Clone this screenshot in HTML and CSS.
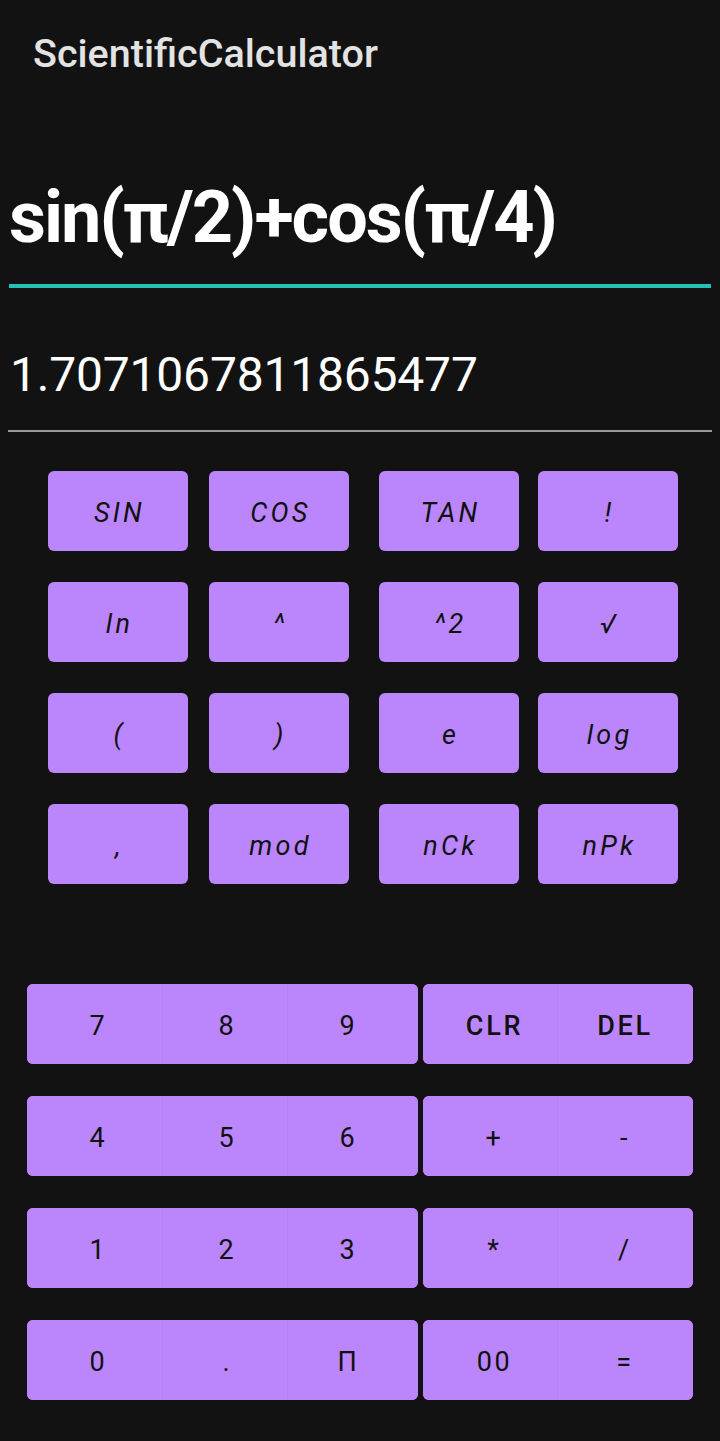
FILE: index.html
```html
<!DOCTYPE html>
<html lang="en">
<head>
<meta charset="utf-8">
<title>ScientificCalculator</title>
<link rel="stylesheet" href="styles.css">
</head>
<body>
<div class="app">
  <header class="appbar">ScientificCalculator</header>

  <div class="expression">sin(π/2)+cos(π/4)</div>
  <div class="result">1.7071067811865477</div>

  <div class="sci-grid">
    <button class="sci">SIN</button>
    <button class="sci">COS</button>
    <button class="sci">TAN</button>
    <button class="sci">!</button>
    <button class="sci">ln</button>
    <button class="sci">^</button>
    <button class="sci">^2</button>
    <button class="sci">√</button>
    <button class="sci">(</button>
    <button class="sci">)</button>
    <button class="sci">e</button>
    <button class="sci">log</button>
    <button class="sci">,</button>
    <button class="sci">mod</button>
    <button class="sci">nCk</button>
    <button class="sci">nPk</button>
  </div>

  <div class="keypad">
    <div class="key-row">
      <div class="group group-num">
        <button class="key k1">7</button><button class="key k2">8</button><button class="key k3">9</button>
      </div>
      <div class="group group-op">
        <button class="key o1 word">CLR</button><button class="key o2 word">DEL</button>
      </div>
    </div>
    <div class="key-row">
      <div class="group group-num">
        <button class="key k1">4</button><button class="key k2">5</button><button class="key k3">6</button>
      </div>
      <div class="group group-op">
        <button class="key o1">+</button><button class="key o2">-</button>
      </div>
    </div>
    <div class="key-row">
      <div class="group group-num">
        <button class="key k1">1</button><button class="key k2">2</button><button class="key k3">3</button>
      </div>
      <div class="group group-op">
        <button class="key o1">*</button><button class="key o2">/</button>
      </div>
    </div>
    <div class="key-row">
      <div class="group group-num">
        <button class="key k1">0</button><button class="key k2">.</button><button class="key k3">Π</button>
      </div>
      <div class="group group-op">
        <button class="key o1">00</button><button class="key o2">=</button>
      </div>
    </div>
  </div>
</div>
</body>
</html>
```

FILE: styles.css
```css
html, body {
  margin: 0;
  padding: 0;
  background: #121212;
}

body {
  font-family: Roboto, "Noto Sans", "Liberation Sans", sans-serif;
  color: #ffffff;
}

.app {
  width: 720px;
  min-height: 1441px;
  background: #121212;
}

.appbar {
  height: 104px;
  display: flex;
  align-items: center;
  padding: 2px 0 0 33px;
  font-size: 39.5px;
  font-weight: 500;
  color: #e3e3e3;
  box-sizing: border-box;
}

.expression {
  margin: 72px 9px 0 9px;
  padding-bottom: 24px;
  font-size: 72px;
  font-weight: 700;
  line-height: 84px;
  letter-spacing: -2px;
  color: #ffffff;
  border-bottom: 4px solid #22c3b3;
  white-space: nowrap;
}

.result {
  margin: 59px 8px 0 8px;
  padding: 0 0 27px 2px;
  font-size: 48px;
  font-weight: 400;
  line-height: 56px;
  letter-spacing: -0.2px;
  color: #ffffff;
  border-bottom: 2px solid #9a9a9a;
}

.sci-grid {
  margin-top: 39px;
  padding-left: 48px;
  display: grid;
  grid-template-columns: 161px 170px 159px 140px;
  grid-auto-rows: 80px;
  row-gap: 31px;
}

.sci {
  width: 140px;
  height: 80px;
  border: none;
  border-radius: 6px;
  background: #bb86fc;
  color: #111111;
  font-family: Roboto, "Noto Sans", "Liberation Sans", sans-serif;
  font-size: 27px;
  font-style: italic;
  font-weight: 400;
  letter-spacing: 0.12em;
  padding: 4px 0 0 3px;
}

.keypad {
  margin-top: 100px;
  padding-left: 27px;
  display: flex;
  flex-direction: column;
  gap: 32px;
}

.key-row {
  display: flex;
  gap: 5px;
  height: 80px;
}

.group {
  display: flex;
  border-radius: 6px;
  overflow: hidden;
  background: #bb86fc;
}

.group-num {
  width: 391px;
}

.group-op {
  width: 270px;
}

.key {
  height: 80px;
  border: none;
  background: #bb86fc;
  color: #111111;
  font-family: Roboto, "Noto Sans", "Liberation Sans", sans-serif;
  font-size: 27px;
  font-weight: 400;
  letter-spacing: 0.1em;
  padding: 4px 0 0 0;
  box-shadow: inset 1px 0 0 rgba(0, 0, 0, 0.045);
}

.key.word {
  font-weight: 500;
}

.key:first-child {
  box-shadow: none;
}

.k1 {
  flex: 0 0 135px;
  padding-left: 8px;
}

.k2 {
  flex: 0 0 125px;
  padding-left: 6px;
}

.k3 {
  flex: 1 1 0;
  padding-right: 8px;
}

.o1 {
  flex: 0 0 134px;
  padding-left: 9px;
}

.o2 {
  flex: 1 1 0;
  padding-left: 0;
}
```
